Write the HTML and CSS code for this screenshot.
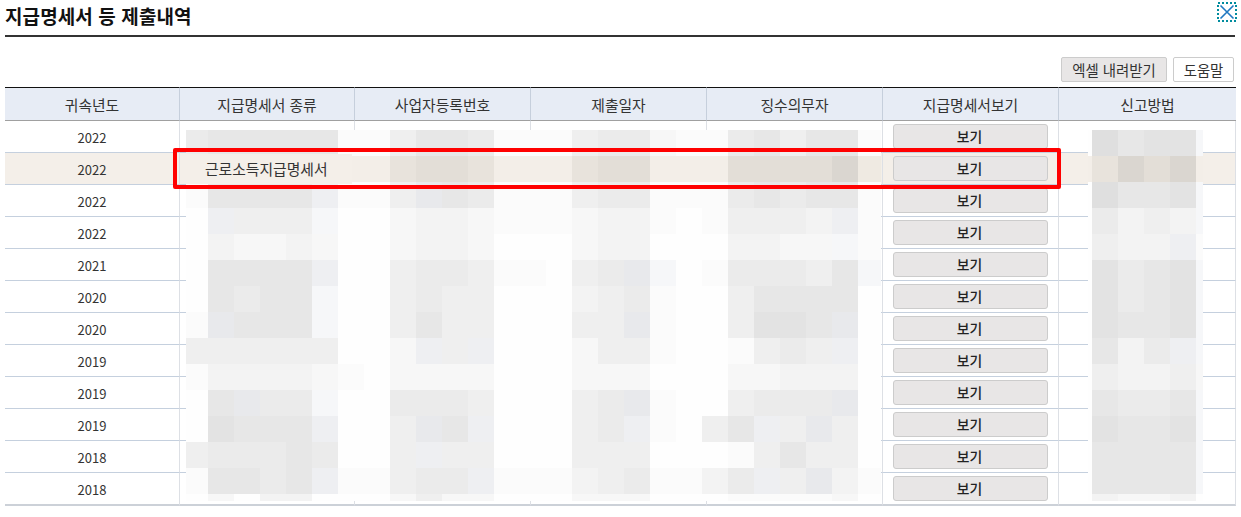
FILE: index.html
```html
<!DOCTYPE html>
<html lang="ko">
<head>
<meta charset="utf-8">
<title>지급명세서 등 제출내역</title>
<link rel="stylesheet" href="styles.css">
</head>
<body>
<main class="page">
  <header class="title-bar">
    <h1 class="title">지급명세서 등 제출내역</h1>
    <button class="close" type="button" aria-label="닫기">
      <svg width="20" height="20" viewBox="0 0 20 20"><rect class="close-frame" x="1" y="1" width="18" height="18"/><path class="close-x" d="M3.5 3.5 16.5 16.5M16.5 3.5 3.5 16.5"/></svg>
    </button>
  </header>
  <div class="toolbar">
    <button class="tool tool-grey" type="button">엑셀 내려받기</button>
    <button class="tool" type="button">도움말</button>
  </div>
  <div class="grid-wrap">
    <table class="grid">
      <colgroup><col class="c1"><col class="c1"><col class="c2"><col class="c2"><col class="c2"><col class="c2"><col class="c3"></colgroup>
      <thead><tr><th>귀속년도</th><th>지급명세서 종류</th><th>사업자등록번호</th><th>제출일자</th><th>징수의무자</th><th>지급명세서보기</th><th>신고방법</th></tr></thead>
      <tbody>
        <tr><td class="year">2022</td><td></td><td></td><td></td><td></td><td><button class="view" type="button">보기</button></td><td></td></tr>
        <tr class="picked"><td class="year">2022</td><td></td><td></td><td></td><td></td><td><button class="view" type="button">보기</button></td><td></td></tr>
        <tr><td class="year">2022</td><td></td><td></td><td></td><td></td><td><button class="view" type="button">보기</button></td><td></td></tr>
        <tr><td class="year">2022</td><td></td><td></td><td></td><td></td><td><button class="view" type="button">보기</button></td><td></td></tr>
        <tr><td class="year">2021</td><td></td><td></td><td></td><td></td><td><button class="view" type="button">보기</button></td><td></td></tr>
        <tr><td class="year">2020</td><td></td><td></td><td></td><td></td><td><button class="view" type="button">보기</button></td><td></td></tr>
        <tr><td class="year">2020</td><td></td><td></td><td></td><td></td><td><button class="view" type="button">보기</button></td><td></td></tr>
        <tr><td class="year">2019</td><td></td><td></td><td></td><td></td><td><button class="view" type="button">보기</button></td><td></td></tr>
        <tr><td class="year">2019</td><td></td><td></td><td></td><td></td><td><button class="view" type="button">보기</button></td><td></td></tr>
        <tr><td class="year">2019</td><td></td><td></td><td></td><td></td><td><button class="view" type="button">보기</button></td><td></td></tr>
        <tr><td class="year">2018</td><td></td><td></td><td></td><td></td><td><button class="view" type="button">보기</button></td><td></td></tr>
        <tr><td class="year">2018</td><td></td><td></td><td></td><td></td><td><button class="view" type="button">보기</button></td><td></td></tr>
      </tbody>
    </table>

    <div class="mosaic mosaic-main" aria-hidden="true">
<i class="f"></i><i class="g"></i><i class="g"></i><i class="g"></i><i class="g"></i><i class="g"></i><i class="b"></i><i class="b"></i><i class="e"></i><i class="g"></i><i class="g"></i><i class="f"></i><i class="b"></i><i class="b"></i><i class="b"></i><i class="e"></i><i class="f"></i><i class="f"></i><i class="c"></i><i class="b"></i><i class="b"></i><i class="f"></i><i class="g"></i><i class="e"></i><i class="g"></i><i class="g"></i><i class="b"></i>
<i class="p"></i><i class="p"></i><i class="p"></i><i class="p"></i><i class="p"></i><i class="p"></i><i class="p"></i><i class="p"></i><i class="r"></i><i class="s"></i><i class="s"></i><i class="r"></i><i class="p"></i><i class="p"></i><i class="p"></i><i class="r"></i><i class="s"></i><i class="s"></i><i class="p"></i><i class="p"></i><i class="p"></i><i class="s"></i><i class="s"></i><i class="s"></i><i class="s"></i><i class="u"></i><i class="q"></i>
<i class="b"></i><i class="g"></i><i class="g"></i><i class="g"></i><i class="g"></i><i class="y"></i><i class="b"></i><i class="b"></i><i class="e"></i><i class="z"></i><i class="g"></i><i class="f"></i><i class="b"></i><i class="b"></i><i class="b"></i><i class="e"></i><i class="f"></i><i class="f"></i><i class="b"></i><i class="b"></i><i class="b"></i><i class="f"></i><i class="g"></i><i class="f"></i><i class="g"></i><i class="g"></i><i class="b"></i>
<i class="a"></i><i class="y"></i><i class="e"></i><i class="e"></i><i class="e"></i><i class="x"></i><i class="a"></i><i class="a"></i><i class="c"></i><i class="d"></i><i class="d"></i><i class="c"></i><i class="b"></i><i class="b"></i><i class="b"></i><i class="c"></i><i class="d"></i><i class="d"></i><i class="b"></i><i class="a"></i><i class="b"></i><i class="e"></i><i class="e"></i><i class="e"></i><i class="d"></i><i class="y"></i><i class="b"></i>
<i class="a"></i><i class="d"></i><i class="c"></i><i class="c"></i><i class="d"></i><i class="c"></i><i class="a"></i><i class="a"></i><i class="c"></i><i class="d"></i><i class="d"></i><i class="c"></i><i class="a"></i><i class="a"></i><i class="a"></i><i class="c"></i><i class="d"></i><i class="d"></i><i class="a"></i><i class="a"></i><i class="a"></i><i class="d"></i><i class="d"></i><i class="c"></i><i class="c"></i><i class="x"></i><i class="b"></i>
<i class="a"></i><i class="g"></i><i class="g"></i><i class="g"></i><i class="g"></i><i class="y"></i><i class="a"></i><i class="a"></i><i class="e"></i><i class="f"></i><i class="f"></i><i class="e"></i><i class="b"></i><i class="b"></i><i class="a"></i><i class="e"></i><i class="f"></i><i class="z"></i><i class="x"></i><i class="a"></i><i class="b"></i><i class="f"></i><i class="f"></i><i class="f"></i><i class="e"></i><i class="g"></i><i class="x"></i>
<i class="a"></i><i class="g"></i><i class="f"></i><i class="g"></i><i class="g"></i><i class="x"></i><i class="a"></i><i class="a"></i><i class="e"></i><i class="f"></i><i class="e"></i><i class="e"></i><i class="a"></i><i class="a"></i><i class="a"></i><i class="d"></i><i class="e"></i><i class="f"></i><i class="b"></i><i class="a"></i><i class="a"></i><i class="e"></i><i class="g"></i><i class="g"></i><i class="g"></i><i class="g"></i><i class="a"></i>
<i class="b"></i><i class="z"></i><i class="g"></i><i class="g"></i><i class="g"></i><i class="x"></i><i class="a"></i><i class="a"></i><i class="e"></i><i class="g"></i><i class="e"></i><i class="e"></i><i class="a"></i><i class="a"></i><i class="a"></i><i class="e"></i><i class="e"></i><i class="z"></i><i class="b"></i><i class="a"></i><i class="a"></i><i class="e"></i><i class="h"></i><i class="h"></i><i class="g"></i><i class="z"></i><i class="a"></i>
<i class="e"></i><i class="e"></i><i class="e"></i><i class="e"></i><i class="e"></i><i class="e"></i><i class="a"></i><i class="a"></i><i class="c"></i><i class="y"></i><i class="e"></i><i class="y"></i><i class="a"></i><i class="a"></i><i class="a"></i><i class="c"></i><i class="e"></i><i class="e"></i><i class="b"></i><i class="a"></i><i class="a"></i><i class="b"></i><i class="e"></i><i class="f"></i><i class="e"></i><i class="y"></i><i class="a"></i>
<i class="b"></i><i class="d"></i><i class="d"></i><i class="d"></i><i class="d"></i><i class="c"></i><i class="b"></i><i class="a"></i><i class="c"></i><i class="c"></i><i class="c"></i><i class="c"></i><i class="a"></i><i class="a"></i><i class="a"></i><i class="c"></i><i class="c"></i><i class="c"></i><i class="a"></i><i class="a"></i><i class="a"></i><i class="c"></i><i class="c"></i><i class="d"></i><i class="d"></i><i class="d"></i><i class="a"></i>
<i class="a"></i><i class="g"></i><i class="z"></i><i class="f"></i><i class="f"></i><i class="x"></i><i class="a"></i><i class="a"></i><i class="f"></i><i class="f"></i><i class="f"></i><i class="e"></i><i class="a"></i><i class="a"></i><i class="a"></i><i class="e"></i><i class="f"></i><i class="z"></i><i class="b"></i><i class="a"></i><i class="a"></i><i class="e"></i><i class="f"></i><i class="f"></i><i class="f"></i><i class="z"></i><i class="a"></i>
<i class="a"></i><i class="h"></i><i class="g"></i><i class="g"></i><i class="g"></i><i class="y"></i><i class="a"></i><i class="a"></i><i class="e"></i><i class="z"></i><i class="g"></i><i class="y"></i><i class="a"></i><i class="a"></i><i class="a"></i><i class="e"></i><i class="f"></i><i class="y"></i><i class="b"></i><i class="a"></i><i class="e"></i><i class="g"></i><i class="y"></i><i class="e"></i><i class="z"></i><i class="e"></i><i class="a"></i>
<i class="e"></i><i class="f"></i><i class="f"></i><i class="f"></i><i class="g"></i><i class="f"></i><i class="a"></i><i class="a"></i><i class="e"></i><i class="y"></i><i class="e"></i><i class="e"></i><i class="a"></i><i class="a"></i><i class="a"></i><i class="e"></i><i class="e"></i><i class="e"></i><i class="a"></i><i class="a"></i><i class="a"></i><i class="b"></i><i class="e"></i><i class="g"></i><i class="e"></i><i class="e"></i><i class="a"></i>
<i class="b"></i><i class="g"></i><i class="g"></i><i class="f"></i><i class="g"></i><i class="y"></i><i class="b"></i><i class="b"></i><i class="e"></i><i class="f"></i><i class="f"></i><i class="y"></i><i class="b"></i><i class="b"></i><i class="b"></i><i class="d"></i><i class="e"></i><i class="f"></i><i class="b"></i><i class="b"></i><i class="d"></i><i class="f"></i><i class="y"></i><i class="e"></i><i class="z"></i><i class="d"></i><i class="b"></i>
<i class="a"></i><i class="c"></i><i class="a"></i><i class="d"></i><i class="d"></i><i class="a"></i><i class="a"></i><i class="a"></i><i class="c"></i><i class="e"></i><i class="c"></i><i class="c"></i><i class="a"></i><i class="a"></i><i class="a"></i><i class="c"></i><i class="c"></i><i class="c"></i><i class="a"></i><i class="a"></i><i class="a"></i><i class="b"></i><i class="b"></i><i class="b"></i><i class="b"></i><i class="c"></i><i class="a"></i>
    </div>

    <div class="mosaic mosaic-side" aria-hidden="true">
<i class="a"></i><i class="k"></i><i class="g"></i><i class="h"></i><i class="h"></i><i class="x"></i>
<i class="p"></i><i class="r"></i><i class="u"></i><i class="s"></i><i class="u"></i><i class="p"></i>
<i class="a"></i><i class="k"></i><i class="g"></i><i class="g"></i><i class="h"></i><i class="x"></i>
<i class="a"></i><i class="f"></i><i class="d"></i><i class="e"></i><i class="d"></i><i class="x"></i>
<i class="a"></i><i class="e"></i><i class="d"></i><i class="d"></i><i class="y"></i><i class="b"></i>
<i class="a"></i><i class="h"></i><i class="f"></i><i class="g"></i><i class="h"></i><i class="x"></i>
<i class="a"></i><i class="h"></i><i class="f"></i><i class="g"></i><i class="h"></i><i class="x"></i>
<i class="a"></i><i class="h"></i><i class="g"></i><i class="g"></i><i class="h"></i><i class="x"></i>
<i class="a"></i><i class="g"></i><i class="d"></i><i class="f"></i><i class="y"></i><i class="x"></i>
<i class="a"></i><i class="e"></i><i class="d"></i><i class="d"></i><i class="e"></i><i class="c"></i>
<i class="a"></i><i class="g"></i><i class="f"></i><i class="f"></i><i class="g"></i><i class="x"></i>
<i class="a"></i><i class="h"></i><i class="g"></i><i class="g"></i><i class="h"></i><i class="x"></i>
<i class="a"></i><i class="g"></i><i class="g"></i><i class="g"></i><i class="g"></i><i class="x"></i>
<i class="a"></i><i class="g"></i><i class="g"></i><i class="g"></i><i class="g"></i><i class="x"></i>
<i class="a"></i><i class="d"></i><i class="c"></i><i class="c"></i><i class="d"></i><i class="a"></i>
    </div>

    <div class="type-patch">근로소득지급명세서</div>
    <div class="red-box" aria-hidden="true"></div>
  </div>
</main>
</body>
</html>
```

FILE: styles.css
```css
* { box-sizing: border-box; }

html, body { margin: 0; padding: 0; background: #fff; }

body {
  font-family: "Noto Sans CJK KR", "Noto Sans", sans-serif;
  color: #333;
}

.page {
  width: 1241px;
  height: 517px;
  padding-left: 5px;
  overflow: hidden;
}

.title-bar {
  display: flex;
  justify-content: space-between;
  width: 1230px;
  height: 37px;
  border-bottom: 2px solid #333;
}

.title {
  margin: 0;
  font-size: 19px;
  font-weight: 700;
  letter-spacing: 0.1px;
  line-height: 32px;
  color: #111;
}

.close {
  width: 20px;
  height: 20px;
  margin: 2px -2px 0 0;
  padding: 0;
  border: 0;
  background: none;
}

.close svg { display: block; }
.close-frame { fill: none; stroke: #008c9e; stroke-width: 2; stroke-dasharray: 2 2; }
.close-x { fill: none; stroke: #1f78c1; stroke-width: 1.6; }

.toolbar {
  display: flex;
  justify-content: flex-end;
  gap: 6px;
  width: 1229px;
  height: 25px;
  margin: 20px 0 5px;
}

.tool {
  height: 25px;
  padding: 0;
  width: 61px;
  border: 1px solid #ccc;
  border-radius: 2px;
  background: #fff;
  font: 14.4px/21px "Noto Sans CJK KR", sans-serif;
  color: #333;
}

.tool-grey { width: 106px; background: #e8e6e6; }

.grid-wrap { position: relative; width: 1231px; }

.grid {
  width: 1231px;
  border-collapse: separate;
  border-spacing: 0;
  table-layout: fixed;
}

.c1 { width: 175px; }
.c2 { width: 176px; }
.c3 { width: 177px; }

.grid th {
  height: 34px;
  padding: 0;
  border-top: 1px solid #111;
  border-bottom: 1px solid #a0a0a0;
  border-right: 1px solid #c6cfdc;
  background: #e7ecf5;
  font-size: 14.8px;
  font-weight: 400;
  color: #333;
}

.grid th:last-child { border-right: 0; }

.grid td {
  height: 32px;
  padding: 0;
  border-bottom: 1px solid #c5d0de;
  border-right: 1px solid #dde0e5;
  text-align: center;
  vertical-align: top;
}

.grid tbody tr:last-child td {
  height: 33px;
  border-bottom: 2px solid #ccd1d8;
}

.picked td { background: #f4efe9; }

.grid .year {
  padding-top: 2px;
  font-size: 13px;
  line-height: 29px;
  color: #333;
}

.view {
  display: block;
  width: 155px;
  height: 25px;
  margin: 3px auto 0;
  padding: 0 2px 2px 0;
  border: 1.5px solid #ccc;
  border-radius: 3px;
  background: #e8e6e6;
  font: 500 13.8px/20px "Noto Sans CJK KR", sans-serif;
  color: #222;
}

.mosaic {
  position: absolute;
  top: 43px;
  display: grid;
  grid-auto-rows: 26px;
  height: 371px;
  overflow: hidden;
  background: #fdfdfd;
}

.mosaic-main {
  left: 181px;
  grid-template-columns: 22px repeat(25, 26px) 23px;
}

.mosaic-side {
  left: 1083px;
  grid-template-columns: 4px repeat(4, 26px) 7px;
}

.mosaic i { display: block; }
.mosaic .a { background: #fefefe; }
.mosaic .b { background: #fbfbfb; }
.mosaic .c { background: #f7f7f7; }
.mosaic .d { background: #f3f3f3; }
.mosaic .e { background: #efefef; }
.mosaic .f { background: #ebebeb; }
.mosaic .g { background: #e7e7e7; }
.mosaic .h { background: #e3e3e3; }
.mosaic .k { background: #dfdfdf; }
.mosaic .p { background: #f3eee8; }
.mosaic .q { background: #efeae2; }
.mosaic .r { background: #e8e3dc; }
.mosaic .s { background: #e3ded7; }
.mosaic .u { background: #dad6d0; }
.mosaic .x { background: #f6f7f9; }
.mosaic .y { background: #eeeff2; }
.mosaic .z { background: #e8e9ec; }

.type-patch {
  position: absolute;
  top: 67px;
  left: 175px;
  width: 172px;
  height: 30px;
  padding-left: 25px;
  background: #f4efe9;
  font-size: 14.8px;
  line-height: 30px;
  color: #333;
}

.red-box {
  position: absolute;
  top: 61px;
  left: 168px;
  width: 888px;
  height: 41px;
  border: 4px solid #f00;
  border-radius: 2px;
}
```
